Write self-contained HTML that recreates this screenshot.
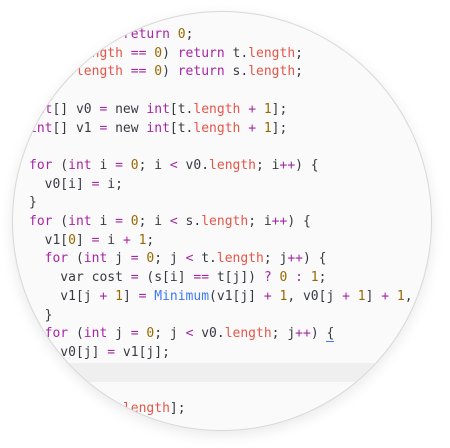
<!DOCTYPE html>
<html><head><style>
html,body{margin:0;padding:0;background:#fff;width:450px;height:448px;overflow:hidden}
.c{position:absolute;left:12px;top:11px;width:418px;height:418px;border-radius:50%;background:#fafafa;border:1px solid #d8d8d8;overflow:hidden;box-shadow:0 4px 14px rgba(0,0,0,0.09)}
.hl{position:absolute;left:0;right:0;top:351px;height:19px;background:#efefef}
pre{position:absolute;left:16px;top:14px;margin:0;font-family:"DejaVu Sans Mono","Liberation Mono",monospace;font-size:13px;line-height:18.7px;color:#383a42;white-space:pre}
.k{color:#a626a4}.p{color:#e45649}.n{color:#986801}.o{color:#a626a4}.f{color:#4078f2}
.u{border-bottom:1px solid #4078f2}
</style></head><body>
<div class="c"><div class="hl"></div>
<pre><span class="k">if</span> (s <span class="o">==</span> t) <span class="k">return</span> <span class="n">0</span>;
<span class="k">if</span> (s.<span class="p">length</span> <span class="o">==</span> <span class="n">0</span>) <span class="k">return</span> t.<span class="p">length</span>;
<span class="k">if</span> (t.<span class="p">length</span> <span class="o">==</span> <span class="n">0</span>) <span class="k">return</span> s.<span class="p">length</span>;

<span class="k">int</span>[] v0 <span class="o">=</span> new <span class="k">int</span>[t.<span class="p">length</span> <span class="o">+</span> <span class="n">1</span>];
<span class="k">int</span>[] v1 <span class="o">=</span> new <span class="k">int</span>[t.<span class="p">length</span> <span class="o">+</span> <span class="n">1</span>];

<span class="k">for</span> (<span class="k">int</span> i <span class="o">=</span> <span class="n">0</span>; i <span class="o">&lt;</span> v0.<span class="p">length</span>; i<span class="o">++</span>) {
  v0[i] <span class="o">=</span> i;
}
<span class="k">for</span> (<span class="k">int</span> i <span class="o">=</span> <span class="n">0</span>; i <span class="o">&lt;</span> s.<span class="p">length</span>; i<span class="o">++</span>) {
  v1[<span class="n">0</span>] <span class="o">=</span> i <span class="o">+</span> <span class="n">1</span>;
  <span class="k">for</span> (<span class="k">int</span> j <span class="o">=</span> <span class="n">0</span>; j <span class="o">&lt;</span> t.<span class="p">length</span>; j<span class="o">++</span>) {
    var cost <span class="o">=</span> (s[i] <span class="o">==</span> t[j]) <span class="o">?</span> <span class="n">0</span> <span class="o">:</span> <span class="n">1</span>;
    v1[j <span class="o">+</span> <span class="n">1</span>] <span class="o">=</span> <span class="f">Minimum</span>(v1[j] <span class="o">+</span> <span class="n">1</span>, v0[j <span class="o">+</span> <span class="n">1</span>] <span class="o">+</span> <span class="n">1</span>, v0[j] <span class="o">+</span> cost);
  }
  <span class="k">for</span> (<span class="k">int</span> j <span class="o">=</span> <span class="n">0</span>; j <span class="o">&lt;</span> v0.<span class="p">length</span>; j<span class="o">++</span>) <span class="u">{</span>
    v0[j] <span class="o">=</span> v1[j];
  }
}
<span class="k">return</span> v1[t.<span class="p">length</span>];</pre>
</div>
</body></html>
